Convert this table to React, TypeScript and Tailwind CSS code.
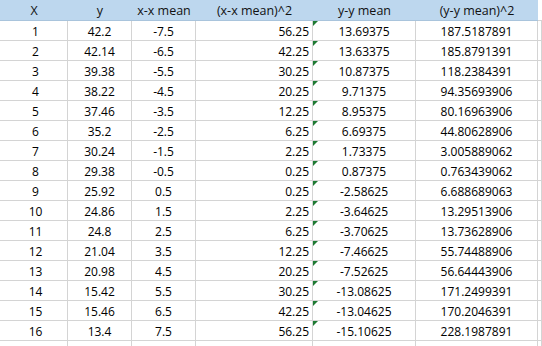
const headers = ['X', 'y', 'x-x mean', '(x-x mean)^2', 'y-y mean', '(y-y mean)^2']

const rows: string[][] = [
  ['1', '42.2', '-7.5', '56.25', '13.69375', '187.5187891'],
  ['2', '42.14', '-6.5', '42.25', '13.63375', '185.8791391'],
  ['3', '39.38', '-5.5', '30.25', '10.87375', '118.2384391'],
  ['4', '38.22', '-4.5', '20.25', '9.71375', '94.35693906'],
  ['5', '37.46', '-3.5', '12.25', '8.95375', '80.16963906'],
  ['6', '35.2', '-2.5', '6.25', '6.69375', '44.80628906'],
  ['7', '30.24', '-1.5', '2.25', '1.73375', '3.005889062'],
  ['8', '29.38', '-0.5', '0.25', '0.87375', '0.763439062'],
  ['9', '25.92', '0.5', '0.25', '-2.58625', '6.688689063'],
  ['10', '24.86', '1.5', '2.25', '-3.64625', '13.29513906'],
  ['11', '24.8', '2.5', '6.25', '-3.70625', '13.73628906'],
  ['12', '21.04', '3.5', '12.25', '-7.46625', '55.74488906'],
  ['13', '20.98', '4.5', '20.25', '-7.52625', '56.64443906'],
  ['14', '15.42', '5.5', '30.25', '-13.08625', '171.2499391'],
  ['15', '15.46', '6.5', '42.25', '-13.04625', '170.2046391'],
  ['16', '13.4', '7.5', '56.25', '-15.10625', '228.1987891'],
]

// Excel-ish grid cell: 20px row incl. bottom gridline
const cell = 'h-5 border-r border-b border-[#d4d4d4] flex items-center text-[12px] text-black'

export default function App() {
  return (
    <div className="w-[542px] h-[346px] overflow-hidden bg-white font-['Open_Sans',sans-serif]">
      <div className="grid grid-cols-[68px_64px_64px_117px_103px_122px_1fr]">
        {headers.map((h) => (
          <div key={h} className="h-[21px] bg-[#bdd7ee] border-b border-[#a9c4dc] flex items-center justify-center pt-[2px] text-[12.5px] text-[#111]">
            {h}
          </div>
        ))}
        <div className="h-[21px] border-b border-[#d4d4d4]" />

        {[...rows, ['', '', '', '', '', '']].map((r, i) => (
          <Row key={i} r={r} />
        ))}
      </div>
    </div>
  )
}

function Row({ r }: { r: string[] }) {
  const flag = r[0] !== ''
  return (
    <>
      <div className={`${cell} justify-center pl-1 pt-[2px]`}>{r[0]}</div>
      <div className={`${cell} justify-center pt-[2px]`}>{r[1]}</div>
      <div className={`${cell} justify-center pt-[2px]`}>{r[2]}</div>
      <div className={`${cell} justify-end pr-[3px] pt-[2px]`}>{r[3]}</div>
      <div className={`${cell} justify-center pt-[2px] relative`}>
        {flag && (
          <span className="absolute left-0 top-0 w-0 h-0 border-t-[5px] border-r-[5px] border-t-[#1e7a33] border-r-transparent" />
        )}
        {r[4]}
      </div>
      <div className={`${cell} justify-center pt-[2px]`}>{r[5]}</div>
      <div className={cell} />
    </>
  )
}
